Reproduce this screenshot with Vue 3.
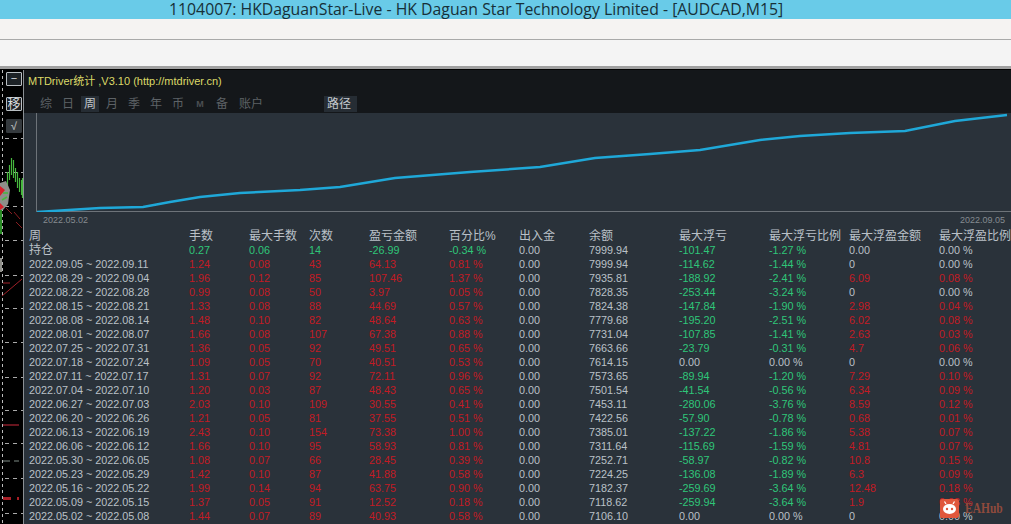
<script setup>
const tabs = [
  { t: '综' }, { t: '日' }, { t: '周', on: true }, { t: '月' }, { t: '季' }, { t: '年' }, { t: '币' },
  { t: 'M', small: true }, { t: '备' }, { t: '账户', wide: true }
]
const heads = ['周', '手数', '最大手数', '次数', '盈亏金额', '百分比%', '出入金', '余额', '最大浮亏', '最大浮亏比例', '最大浮盈金额', '最大浮盈比例']
const raw = `2022.09.05 ~ 2022.09.11|1.24|0.08|43|64.13|0.81 %|7999.94|-114.62|-1.44 %|0|0.00 %
2022.08.29 ~ 2022.09.04|1.96|0.12|85|107.46|1.37 %|7935.81|-188.92|-2.41 %|6.09|0.08 %
2022.08.22 ~ 2022.08.28|0.99|0.08|50|3.97|0.05 %|7828.35|-253.44|-3.24 %|0|0.00 %
2022.08.15 ~ 2022.08.21|1.33|0.08|88|44.69|0.57 %|7824.38|-147.84|-1.90 %|2.98|0.04 %
2022.08.08 ~ 2022.08.14|1.48|0.10|82|48.64|0.63 %|7779.68|-195.20|-2.51 %|6.02|0.08 %
2022.08.01 ~ 2022.08.07|1.66|0.08|107|67.38|0.88 %|7731.04|-107.85|-1.41 %|2.63|0.03 %
2022.07.25 ~ 2022.07.31|1.36|0.05|92|49.51|0.65 %|7663.66|-23.79|-0.31 %|4.7|0.06 %
2022.07.18 ~ 2022.07.24|1.09|0.05|70|40.51|0.53 %|7614.15|0.00|0.00 %|0|0.00 %
2022.07.11 ~ 2022.07.17|1.31|0.07|92|72.11|0.96 %|7573.65|-89.94|-1.20 %|7.29|0.10 %
2022.07.04 ~ 2022.07.10|1.20|0.03|87|48.43|0.65 %|7501.54|-41.54|-0.56 %|6.34|0.09 %
2022.06.27 ~ 2022.07.03|2.03|0.10|109|30.55|0.41 %|7453.11|-280.06|-3.76 %|8.59|0.12 %
2022.06.20 ~ 2022.06.26|1.21|0.05|81|37.55|0.51 %|7422.56|-57.90|-0.78 %|0.68|0.01 %
2022.06.13 ~ 2022.06.19|2.43|0.10|154|73.38|1.00 %|7385.01|-137.22|-1.86 %|5.38|0.07 %
2022.06.06 ~ 2022.06.12|1.66|0.10|95|58.93|0.81 %|7311.64|-115.69|-1.59 %|4.81|0.07 %
2022.05.30 ~ 2022.06.05|1.08|0.07|66|28.45|0.39 %|7252.71|-58.97|-0.82 %|10.8|0.15 %
2022.05.23 ~ 2022.05.29|1.42|0.10|87|41.88|0.58 %|7224.25|-136.08|-1.89 %|6.3|0.09 %
2022.05.16 ~ 2022.05.22|1.99|0.14|94|63.75|0.90 %|7182.37|-259.69|-3.64 %|12.48|0.18 %
2022.05.09 ~ 2022.05.15|1.37|0.05|91|12.52|0.18 %|7118.62|-259.94|-3.64 %|1.9|0.03 %
2022.05.02 ~ 2022.05.08|1.44|0.07|89|40.93|0.58 %|7106.10|0.00|0.00 %|0|0.00 %`
const tone = (v) => (/^-/.test(v) ? 'green' : /^0(\.00)?( %)?$/.test(v) ? 'gray' : 'red')
const rows = raw.split('\n').map((l) => {
  const [d, a, b, c, e, f, g, h, i, j, k] = l.split('|')
  return [
    [d, 'gray'], [a, 'red'], [b, 'red'], [c, 'red'], [e, 'red'], [f, 'red'], ['0.00', 'gray'], [g, 'gray'],
    [h, tone(h)], [i, tone(i)], [j, tone(j)], [k, tone(k)]
  ]
})
const hold = [
  ['持仓', 'head'], ['0.27', 'green'], ['0.06', 'green'], ['14', 'green'], ['-26.99', 'green'], ['-0.34 %', 'green'],
  ['0.00', 'gray'], ['7999.94', 'gray'], ['-101.47', 'green'], ['-1.27 %', 'green'], ['0.00', 'gray'], ['0.00 %', 'gray']
]
const curve = '1,99 64,95 107,94 134,89 164,84 204,80 264,77 304,74 359,65 434,59 504,54 559,45 614,41 664,37 724,27 764,23 814,20 869,18 919,8 971,2'
const grid = [138, 172, 206, 240, 275, 308, 342, 377, 410, 443, 478, 513]
const bars = [[7,172,187],[9,165,180],[11,158,175],[13,160,178],[15,168,182],[17,172,188],[19,178,192],[21,180,195],[22,178,198]]
</script>

<template>
  <div class="page">
    <header class="title">1104007: HKDaguanStar-Live - HK Daguan Star Technology Limited - [AUDCAD,M15]</header>
    <div class="bar bar1"></div>
    <div class="bar bar2"></div>
    <div class="work">
      <aside class="side">
        <svg class="side-chart" width="23" height="454" viewBox="0 70 23 454">
          <line x1="2.5" y1="70" x2="2.5" y2="524" stroke="#bbb" stroke-dasharray="3 3" />
          <line v-for="y in grid" :key="y" x1="5" :y1="y + .5" x2="23" :y2="y + .5" stroke="#aaa" stroke-dasharray="4 4" />
          <line v-for="b in bars" :key="b[0]" :x1="b[0] + .5" :y1="b[1]" :x2="b[0] + .5" :y2="b[2]" stroke="#47b83f" stroke-width="1.2" />
          <path d="M0 183 L6 181 L10 190 L8 204 L3 210 L0 210 Z" fill="#8f8f8a" />
          <path d="M0 186 L5 190 L0 196 Z M0 203 L4 207 L0 210 Z" fill="#d8202a" />
          <path d="M3 193 L8 193 M2 200 L7 197" stroke="#47b83f" stroke-width="1.5" />
          <path d="M1 210 V234" stroke="#35b030" stroke-width="1.6" />
          <path d="M6 208 L12 214 M14 212 L20 219 M16 222 L22 228" stroke="#8a1e22" stroke-width="1" />
          <path d="M0 258 H2 V272 H0 Z" fill="#8f8f8a" />
          <path d="M3 283 H10 M2 296 L22 279" stroke="#a02028" stroke-width="1" />
          <path d="M3 425 H19" stroke="#8a1d28" stroke-width="1.5" />
          <path d="M3 461 H10 M14 461 H19" stroke="#7f8c86" stroke-width="1" />
          <path d="M3 497 H11 V500 H3 Z M17 497 H19 V500 H17 Z" fill="#a81e26" />
        </svg>
        <div class="btn first">−</div>
        <div class="btn second">移</div>
        <div class="btn soft">√</div>
      </aside>
      <main class="panel">
        <div class="name">MTDriver统计 ,V3.10 (http://mtdriver.cn)</div>
        <nav class="tabs">
          <span v-for="t in tabs" :key="t.t" class="tab" :class="{ on: t.on, small: t.small, wide: t.wide }">{{ t.t }}</span>
          <span class="tab on path">路径</span>
        </nav>
        <section class="chart">
          <svg class="curve" width="975" height="99" viewBox="0 0 975 99">
            <line x1="0.5" y1="0" x2="0.5" y2="98" stroke="#6d7379" />
            <line x1="0" y1="98.5" x2="975" y2="98.5" stroke="#6d7379" />
            <polyline :points="curve" fill="none" stroke="#1fa8d8" stroke-width="2.5" />
          </svg>
          <div class="dates"><span>2022.05.02</span><span>2022.09.05</span></div>
        </section>
        <div class="table">
          <div class="row">
            <span v-for="h in heads" :key="h" class="head">{{ h }}</span>
          </div>
          <div class="row">
            <span v-for="(c, i) in hold" :key="i" :class="c[1]">{{ c[0] }}</span>
          </div>
          <div v-for="(r, n) in rows" :key="n" class="row">
            <span v-for="(c, i) in r" :key="i" :class="c[1]">{{ c[0] }}</span>
          </div>
        </div>
        <div class="logo">
          <svg width="19" height="19" viewBox="0 0 19 19">
            <rect width="19" height="19" rx="2" fill="#e0573c" />
            <path d="M6 5 L4.5 2.5 M13 5 L14.5 2.5" stroke="#fff" stroke-width="1.2" />
            <ellipse cx="9.5" cy="10" rx="6.5" ry="5" fill="#fff" />
            <circle cx="7" cy="10" r="1.2" fill="#e0573c" />
            <circle cx="12" cy="10" r="1.2" fill="#e0573c" />
          </svg>
          <span>EAHub</span>
        </div>
      </main>
    </div>
  </div>
</template>

<style>
html, body { margin: 0; background: #2a323a; overflow: hidden; }
</style>

<style scoped>
.page { width: 1011px; height: 524px; overflow: hidden; display: flex; flex-direction: column; font-family: "Liberation Sans", "Noto Sans CJK SC", sans-serif; }
.title { height: 19px; flex: none; background: #69cbe8; color: #173038; font: 15.8px/19px "Open Sans", sans-serif; padding-left: 169px; white-space: nowrap; box-sizing: border-box; padding-bottom: 4px; }
.bar { flex: none; }
.bar1 { height: 20px; background: #f5f3f2; border-bottom: 1px solid #a9a9a9; }
.bar2 { height: 26px; background: #f4f4f4; border-bottom: 3px solid #a0a0a0; }
.work { flex: 1; display: flex; min-height: 0; border-top: 1px solid #000; }
.side { width: 23px; flex: none; position: relative; background: #000; border-right: 1px solid #8b9094; display: flex; flex-direction: column; align-items: flex-start; }
.side-chart { position: absolute; left: 0; top: 0; }
.btn { position: relative; width: 14px; height: 12px; margin-left: 6px; border: 1px solid #b9bec2; border-radius: 1px; background: #1d2226; color: #d8dcde; font-size: 11px; line-height: 12px; text-align: center; }
.btn.first { margin-top: 2px; line-height: 11px; }
.btn.second { margin-top: 11px; font-size: 13px; }
.btn.soft { margin-top: 8px; background: #34393d; border-color: #34393d; color: #a8acae; font-weight: bold; }
.panel { flex: 1; min-width: 0; position: relative; background: #2a323a; display: flex; flex-direction: column; }
.name { height: 21px; background: #14171a; color: #dcd968; font-size: 11px; line-height: 22px; padding-left: 4px; white-space: nowrap; }
.tabs { height: 22px; background: #14171a; display: flex; align-items: flex-start; gap: 4px; padding-left: 13px; }
.tab { width: 18px; height: 16px; margin-top: 5px; color: #5d6266; font-size: 12px; line-height: 16px; text-align: center; }
.tab.on { background: #262d34; color: #c3c8cc; }
.tab.small { font-size: 9px; font-weight: bold; color: #4b4f52; }
.tab.wide { width: 32px; }
.tab.path { width: 33px; margin-left: 53px; padding-right: 3px; box-sizing: border-box; }
.chart { height: 116px; flex: none; background: #2a323a; padding-left: 12px; }
.curve { display: block; }
.dates { display: flex; justify-content: space-between; padding: 2px 6px 0 7px; color: #858b90; font-size: 9px; line-height: 12px; }
.table { display: flex; flex-direction: column; }
.row { display: grid; grid-template-columns: 160px 60px 60px 60px 80px 70px 70px 90px 90px 80px 90px 72px; height: 14px; padding-left: 5px; font-size: 10.8px; line-height: 14px; white-space: nowrap; }
.row span { color: #bac1c8; }
.row .head { color: #bac1c8; font-size: 12px; }
.row .gray { color: #bac1c8; }
.row .red { color: #c21b24; }
.row .green { color: #2fc679; }
.logo { position: absolute; left: 916px; top: 429px; display: flex; align-items: center; gap: 6px; }
.logo span { color: #8f4a3c; font: bold 14px "Liberation Serif", serif; transform: scaleX(.82); transform-origin: left center; }
</style>
